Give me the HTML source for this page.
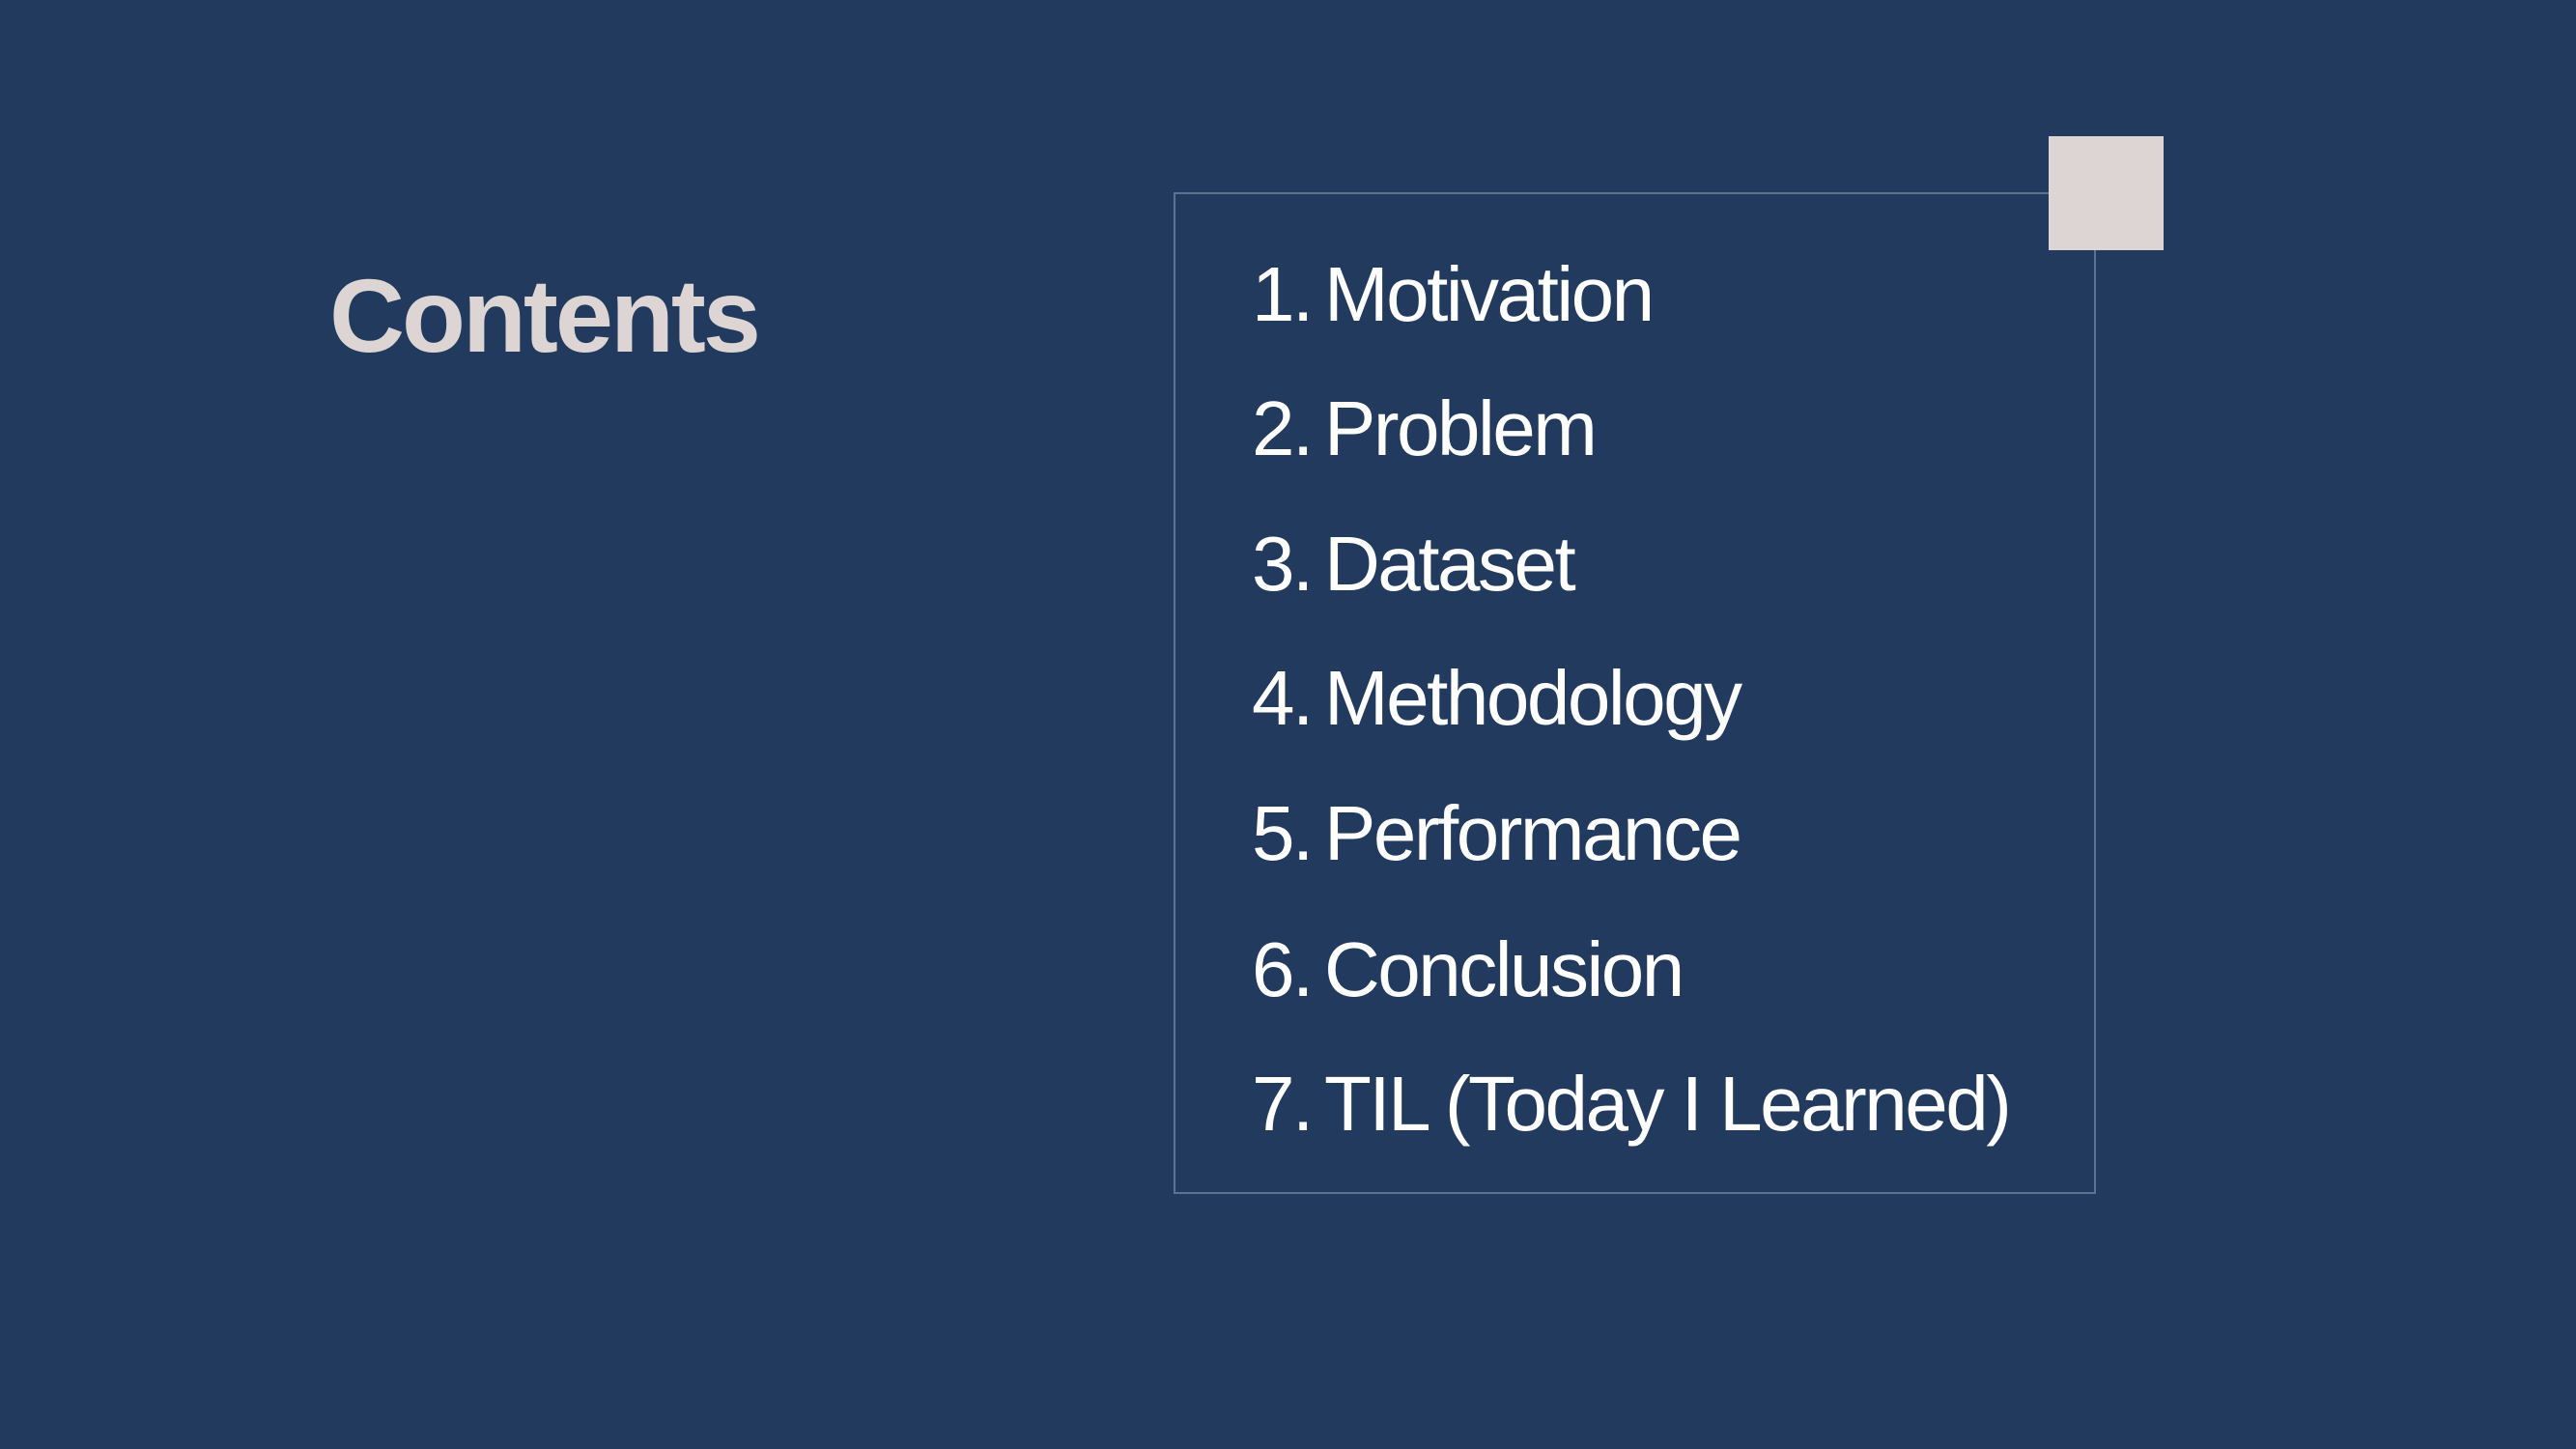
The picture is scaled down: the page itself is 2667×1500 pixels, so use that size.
<!DOCTYPE html>
<html><head><meta charset="utf-8"><style>
html,body{margin:0;padding:0}
body{width:2667px;height:1500px;background:#223a5e;position:relative;overflow:hidden;font-family:"Liberation Sans","NanumGothic",sans-serif}
.title{position:absolute;left:341px;top:273px;font-size:108px;font-weight:bold;color:#ddd5d3;letter-spacing:-3px;line-height:1}
.box{position:absolute;left:1215px;top:199px;width:955px;height:1037px;border:2px solid #5d7190;box-sizing:border-box}
.sq{position:absolute;left:2121px;top:141px;width:119px;height:118px;background:#ddd5d3}
.item{position:absolute;left:1296px;font-size:80px;color:#fff;line-height:1;letter-spacing:-2.5px;white-space:nowrap}
.item span{display:inline-block;width:75px}
</style></head><body>
<div class="title">Contents</div>
<div class="box"></div>
<div class="sq"></div>
<div class="item" style="top:265px"><span>1.</span>Motivation</div>
<div class="item" style="top:404px"><span>2.</span>Problem</div>
<div class="item" style="top:544px"><span>3.</span>Dataset</div>
<div class="item" style="top:683px"><span>4.</span>Methodology</div>
<div class="item" style="top:823px"><span>5.</span>Performance</div>
<div class="item" style="top:964px"><span>6.</span>Conclusion</div>
<div class="item" style="top:1103px"><span>7.</span>TIL (Today I Learned)</div>
</body></html>
